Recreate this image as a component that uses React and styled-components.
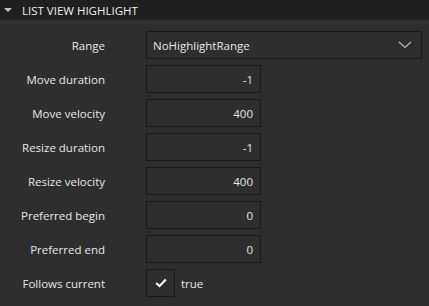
import React from "react";
import styled, { createGlobalStyle } from "styled-components";

const GlobalStyle = createGlobalStyle`
  html, body {
    margin: 0;
    padding: 0;
    background: #2e2e2e;
  }
  body {
    font-family: "Open Sans", "Noto Sans", sans-serif;
    color: #e6e6e6;
  }
`;

const rows = [
  { label: "Move duration", value: "-1" },
  { label: "Move velocity", value: "400" },
  { label: "Resize duration", value: "-1" },
  { label: "Resize velocity", value: "400" },
  { label: "Preferred begin", value: "0" },
  { label: "Preferred end", value: "0" },
];

export default function App() {
  return (
    <Panel>
      <GlobalStyle />
      <Header>
        <Arrow />
        <HeaderTitle>LIST VIEW HIGHLIGHT</HeaderTitle>
      </Header>
      <Form>
        <Label>Range</Label>
        <Combo>
          <span>NoHighlightRange</span>
          <svg width="14" height="8" viewBox="0 0 14 8">
            <path d="M1 1 L7 6.5 L13 1" fill="none" stroke="#bdbdbd" strokeWidth="1.2" />
          </svg>
        </Combo>
        {rows.map(row => (
          <React.Fragment key={row.label}>
            <Label>{row.label}</Label>
            <Field>{row.value}</Field>
          </React.Fragment>
        ))}
        <Label>Follows current</Label>
        <CheckRow>
          <CheckBox>
            <svg width="12" height="10" viewBox="0 0 12 10">
              <path d="M1.2 5 L4.5 8.2 L10.8 1.5" fill="none" stroke="#ffffff" strokeWidth="2" />
            </svg>
          </CheckBox>
          <CheckText>true</CheckText>
        </CheckRow>
      </Form>
    </Panel>
  );
}

const Panel = styled.div`
  width: 429px;
  height: 306px;
  background: #2e2e2e;
`;

const Header = styled.div`
  height: 20px;
  background: #1f1f1f;
  display: flex;
  align-items: center;
  padding-left: 4px;
`;

const Arrow = styled.div`
  width: 0;
  height: 0;
  border-left: 4px solid transparent;
  border-right: 4px solid transparent;
  border-top: 4px solid #bfbfbf;
  margin-right: 10px;
`;

const HeaderTitle = styled.span`
  font-size: 11.5px;
  color: #f0f0f0;
`;

const Form = styled.div`
  display: grid;
  grid-template-columns: 105px 276px;
  grid-auto-rows: 28px;
  column-gap: 41px;
  row-gap: 6px;
  padding-top: 11px;
`;

const Label = styled.div`
  font-size: 11.5px;
  display: flex;
  align-items: center;
  justify-content: flex-end;
  color: #e6e6e6;
  white-space: nowrap;
`;

const Box = styled.div`
  box-sizing: border-box;
  height: 28px;
  border: 1px solid #1a1a1a;
  background: #2e2e2e;
  display: flex;
  align-items: center;
  font-size: 11.5px;
  color: #e6e6e6;
`;

const Combo = styled(Box)`
  width: 276px;
  padding: 0 9px 0 6px;
  justify-content: space-between;
`;

const Field = styled(Box)`
  width: 115px;
  justify-content: flex-end;
  padding-right: 7px;
`;

const CheckRow = styled.div`
  display: flex;
  align-items: center;
  gap: 6px;
`;

const CheckBox = styled(Box)`
  width: 29px;
  justify-content: center;
`;

const CheckText = styled.span`
  font-size: 11.5px;
  color: #e6e6e6;
`;
